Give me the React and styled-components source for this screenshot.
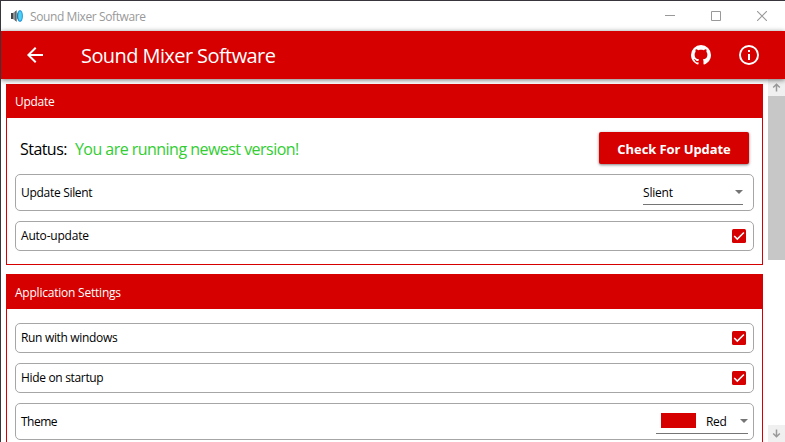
import React from "react";
import styled, { createGlobalStyle } from "styled-components";

const RED = "#d60000";

const GlobalStyle = createGlobalStyle`
  * { box-sizing: border-box; }
  html, body { margin: 0; overflow: hidden; }
  body { font-family: "Open Sans", "Noto Sans", sans-serif; font-size: 12px; color: #000; background: #fff; }
  svg { display: block; flex: none; }
`;

const Window = styled.div`
  width: 785px;
  height: 442px;
  display: flex;
  flex-direction: column;
  overflow: hidden;
  background: #fff;
  border: solid #39353d;
  border-width: 1px 0 0 1px;
`;

const Label = styled.span`
  font-size: ${(p) => p.$size || 12}px;
  letter-spacing: ${(p) => p.$track || 0}px;
  font-weight: ${(p) => p.$weight || 400};
  color: ${(p) => p.$color || "inherit"};
  padding-top: ${(p) => p.$drop || 0}px;
  line-height: 1;
  white-space: nowrap;
`;

const TitleBar = styled.header`
  height: 30px;
  flex: none;
  display: flex;
  align-items: center;
  padding-left: 9px;
  color: #999;
`;

const TitleText = styled(Label)`
  margin-left: 5px;
  flex: 1;
`;

const WindowButton = styled.div`
  width: 46px;
  height: 30px;
  display: flex;
  align-items: center;
  justify-content: center;
`;

const AppBar = styled.div`
  height: 48px;
  flex: none;
  display: flex;
  align-items: center;
  padding: 0 24px 0 22px;
  color: #fff;
  background: ${RED};
  box-shadow: 0 1px 5px rgba(0, 0, 0, 0.55);
  z-index: 1;
`;

const AppTitle = styled(Label)`
  margin-left: 34px;
  flex: 1;
`;

const AppActions = styled.div`
  display: flex;
  gap: 24px;
`;

const Body = styled.div`
  flex: 1;
  min-height: 0;
  display: flex;
`;

const Content = styled.main`
  flex: 1;
  min-width: 0;
  padding: 5px;
  display: flex;
  flex-direction: column;
  gap: 9px;
  overflow: hidden;
`;

const Panel = styled.section`
  flex: none;
  height: ${(p) => p.$height}px;
  border: 1px solid ${RED};
  background: #fff;
`;

const PanelHeader = styled.div`
  height: ${(p) => p.$height}px;
  padding: 1px 8px 0;
  display: flex;
  align-items: center;
  color: #fff;
  background: ${RED};
`;

const PanelBody = styled.div`
  padding: 14px 8px 0;
  display: flex;
  flex-direction: column;
  gap: 10px;
`;

const StatusRow = styled.div`
  height: 32px;
  padding: 0 5px;
  display: flex;
  align-items: center;
`;

const StatusValue = styled(Label)`
  margin-left: 8px;
  flex: 1;
`;

const UpdateButton = styled.button`
  width: 150px;
  height: 32px;
  padding: 2px 0 0;
  border: 0;
  border-radius: 2px;
  color: #fff;
  background: ${RED};
  font-family: inherit;
  box-shadow: 0 1px 3px rgba(0, 0, 0, 0.5);
`;

const SettingRow = styled.div`
  height: ${(p) => (p.$tall ? 37 : 30)}px;
  padding: 0 ${(p) => p.$inset || 7}px 0 5px;
  display: flex;
  align-items: center;
  justify-content: space-between;
  border: 1px solid #a6a6a6;
  border-radius: 5px;
`;

const Select = styled.div`
  width: ${(p) => p.$width}px;
  height: 25px;
  padding-left: ${(p) => p.$indent || 0}px;
  display: flex;
  align-items: center;
  border-bottom: 1px solid #757575;
`;

const SelectValue = styled(Label)`
  flex: 1;
`;

const Swatch = styled.span`
  width: 35px;
  height: 15px;
  margin: -2px 10px 0 0;
  background: ${RED};
`;

const Arrow = styled.span`
  border: solid transparent;
  border-width: 4px 4px 0;
  border-top-color: #757575;
  margin-top: -1px;
`;

const Checkbox = styled.span`
  width: 14px;
  height: 14px;
  display: flex;
  align-items: center;
  justify-content: center;
  border-radius: 1.5px;
  background: ${RED};
`;

const Scrollbar = styled.div`
  width: 17px;
  display: flex;
  flex-direction: column;
  background: #fff;
`;

const ScrollButton = styled.div`
  height: 17px;
  display: flex;
  align-items: center;
  justify-content: center;
  background: #f0f0f0;
`;

const ScrollThumb = styled.div`
  height: 164px;
  background: #c7c7c7;
`;

const ScrollTrack = styled.div`
  flex: 1;
`;

const SpeakerIcon = () => (
  <svg width="15" height="14" viewBox="0 0 15 14">
    <path d="M1 4h3v6H1z" fill="#43474a" />
    <path d="M3 4 7 1v12L3 10z" fill="#8b9194" />
    <path d="M5.5 2.2v9.6" stroke="#5f6568" />
    <ellipse cx="10" cy="7" rx="3" ry="6" fill="#2f9fdc" />
    <ellipse cx="8.8" cy="7" rx="1.8" ry="3.8" fill="#2277a5" />
    <ellipse cx="10" cy="7" rx="1.8" ry="4.4" fill="#4dd0f5" />
  </svg>
);

const BackIcon = () => (
  <svg width="24" height="24" viewBox="0 0 24 24">
    <path d="M20 11H7.83l5.59-5.59L12 4l-8 8 8 8 1.41-1.41L7.83 13H20z" fill="#fff" />
  </svg>
);

const GithubIcon = () => (
  <svg width="24" height="24" viewBox="0 0 24 24">
    <path
      fill="#fff"
      d="M12 2A10 10 0 0 0 2 12c0 4.42 2.87 8.17 6.84 9.5.5.08.66-.23.66-.5v-1.69c-2.77.6-3.36-1.34-3.36-1.34-.46-1.16-1.11-1.47-1.11-1.47-.91-.62.07-.6.07-.6 1 .07 1.53 1.03 1.53 1.03.87 1.52 2.34 1.07 2.91.83.09-.65.35-1.09.63-1.34-2.22-.25-4.55-1.11-4.55-4.92 0-1.11.38-2 1.03-2.71-.1-.25-.45-1.29.1-2.64 0 0 .84-.27 2.75 1.02.79-.22 1.65-.33 2.5-.33s1.71.11 2.5.33c1.91-1.29 2.75-1.02 2.75-1.02.55 1.35.2 2.39.1 2.64.65.71 1.03 1.6 1.03 2.71 0 3.82-2.34 4.66-4.57 4.91.36.31.69.92.69 1.85V21c0 .27.16.59.67.5C19.14 20.16 22 16.42 22 12A10 10 0 0 0 12 2z"
    />
  </svg>
);

const InfoIcon = () => (
  <svg width="24" height="24" viewBox="0 0 24 24">
    <path
      fill="#fff"
      d="M11 9h2V7h-2m1 13c-4.41 0-8-3.59-8-8s3.59-8 8-8 8 3.59 8 8-3.59 8-8 8m0-18A10 10 0 0 0 2 12a10 10 0 0 0 20 0A10 10 0 0 0 12 2m-1 15h2v-6h-2z"
    />
  </svg>
);

const CheckMark = () => (
  <Checkbox>
    <svg width="14" height="14" viewBox="0 0 14 14">
      <path d="M2.2 7 5.3 10.1 11.9 3.5" fill="none" stroke="#fff" strokeWidth="1.5" />
    </svg>
  </Checkbox>
);

const ScrollArrow = ({ down }) => (
  <svg width="9" height="9" viewBox="0 0 9 9">
    <path
      d={down ? "M4.5 0.5V7.5M1.2 4.5 4.5 7.8 7.8 4.5" : "M4.5 8.5V1.5M1.2 4.5 4.5 1.2 7.8 4.5"}
      fill="none"
      stroke="#999"
      strokeWidth="1.5"
    />
  </svg>
);

const ToggleSetting = ({ label, track }) => (
  <SettingRow>
    <Label $track={track}>{label}</Label>
    <CheckMark />
  </SettingRow>
);

export default function App() {
  return (
    <>
      <GlobalStyle />
      <Window>
        <TitleBar>
          <SpeakerIcon />
          <TitleText $track={-0.4} $drop={1}>Sound Mixer Software</TitleText>
          <WindowButton>
            <svg width="10" height="10"><path d="M0 4.5h10" stroke="#999" /></svg>
          </WindowButton>
          <WindowButton>
            <svg width="10" height="10"><path d="M.5.5h9v9h-9z" fill="none" stroke="#999" /></svg>
          </WindowButton>
          <WindowButton>
            <svg width="10" height="10"><path d="m0 0 10 10M10 0 0 10" stroke="#999" strokeWidth="1.1" /></svg>
          </WindowButton>
        </TitleBar>
        <AppBar>
          <BackIcon />
          <AppTitle $size={20} $track={-0.58} $drop={2}>Sound Mixer Software</AppTitle>
          <AppActions>
            <GithubIcon />
            <InfoIcon />
          </AppActions>
        </AppBar>
        <Body>
          <Content>
            <Panel $height={181}>
              <PanelHeader $height={33}><Label $track={-0.28}>Update</Label></PanelHeader>
              <PanelBody>
                <StatusRow>
                  <Label $size={16} $track={-0.55} $drop={2}>Status:</Label>
                  <StatusValue $size={16} $track={-0.53} $drop={2} $color="#32cd32">You are running newest version!</StatusValue>
                  <UpdateButton><Label $size={13} $weight={700} $track={-0.08}>Check For Update</Label></UpdateButton>
                </StatusRow>
                <SettingRow $tall $inset={10}>
                  <Label $track={-0.3} $drop={1}>Update Silent</Label>
                  <Select $width={100}>
                    <SelectValue $track={-0.2} $drop={2}>Slient</SelectValue>
                    <Arrow />
                  </Select>
                </SettingRow>
                <ToggleSetting label="Auto-update" track={-0.2} />
              </PanelBody>
            </Panel>
            <Panel $height={220}>
              <PanelHeader $height={34}><Label $track={-0.22}>Application Settings</Label></PanelHeader>
              <PanelBody>
                <ToggleSetting label="Run with windows" track={-0.33} />
                <ToggleSetting label="Hide on startup" track={-0.33} />
                <SettingRow $tall $inset={5}>
                  <Label $track={-0.5} $drop={1}>Theme</Label>
                  <Select $width={92} $indent={5}>
                    <Swatch />
                    <SelectValue $track={-0.3} $drop={2}>Red</SelectValue>
                    <Arrow />
                  </Select>
                </SettingRow>
              </PanelBody>
            </Panel>
          </Content>
          <Scrollbar>
            <ScrollButton><ScrollArrow /></ScrollButton>
            <ScrollThumb />
            <ScrollTrack />
            <ScrollButton><ScrollArrow down /></ScrollButton>
          </Scrollbar>
        </Body>
      </Window>
    </>
  );
}
